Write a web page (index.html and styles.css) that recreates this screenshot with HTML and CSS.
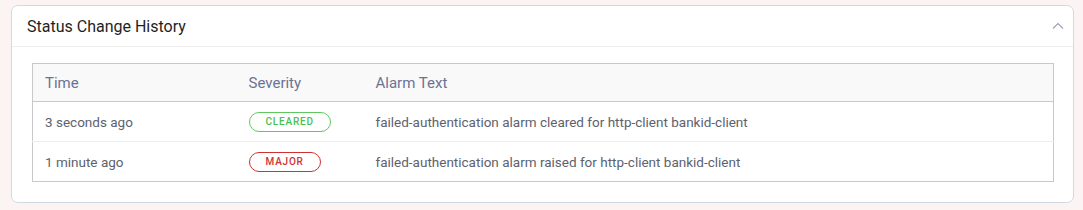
FILE: index.html
```html
<!DOCTYPE html>
<html lang="en">
<head>
    <meta charset="UTF-8">
    <title>Status Change History</title>
    <link rel="stylesheet" href="styles.css">
</head>
<body>
    <div class="panel">
        <div class="panel-header">
            <h2>Status Change History</h2>
            <svg class="chevron" width="12" height="7" viewBox="0 0 12 7">
                <path d="M1 6.5 L6 1.5 L11 6.5" fill="none" stroke="#9aa0bd" stroke-width="1.1"/>
            </svg>
        </div>
        <div class="panel-body">
            <table class="history">
                <colgroup>
                    <col class="col-time">
                    <col class="col-severity">
                    <col>
                </colgroup>
                <thead>
                    <tr>
                        <th>Time</th>
                        <th>Severity</th>
                        <th>Alarm Text</th>
                    </tr>
                </thead>
                <tbody>
                    <tr>
                        <td>3 seconds ago</td>
                        <td><span class="badge badge-cleared">CLEARED</span></td>
                        <td>failed-authentication alarm cleared for http-client bankid-client</td>
                    </tr>
                    <tr>
                        <td>1 minute ago</td>
                        <td><span class="badge badge-major">MAJOR</span></td>
                        <td>failed-authentication alarm raised for http-client bankid-client</td>
                    </tr>
                </tbody>
            </table>
        </div>
    </div>
</body>
</html>
```

FILE: styles.css
```css
* {
    margin: 0;
    padding: 0;
    box-sizing: border-box;
}

body {
    font-family: Roboto, "Liberation Sans", sans-serif;
    background: #fbf4f3;
    padding: 5px 9px 0 11px;
}

.panel {
    background: white;
    border: 1px solid #d3d9e0;
    border-radius: 7px;
}

.panel-header {
    display: flex;
    justify-content: space-between;
    align-items: center;
    height: 41px;
    padding: 0 9px 0 15px;
    border-bottom: 1px solid #eeeeee;
}

.panel-header h2 {
    font-size: 16px;
    font-weight: 400;
    color: #1f1f1f;
}

.chevron {
    margin-bottom: 1px;
}

.panel-body {
    padding: 16px 19px 20px 20px;
}

.history {
    width: 100%;
    border-collapse: collapse;
    table-layout: fixed;
    border: 1px solid #c9c9c9;
}

.col-time { width: 204px; }
.col-severity { width: 127px; }

.history th {
    height: 38px;
    text-align: left;
    font-size: 15px;
    font-weight: 400;
    color: #6c7294;
    background: #f9f9f9;
    padding: 0 12px;
    border-bottom: 1px solid #c9c9c9;
}

.history td {
    height: 40px;
    font-size: 13.5px;
    color: #5d626d;
    padding: 0 12px;
    border-bottom: 1px solid #ececec;
}

.history tbody tr:last-child td {
    border-bottom: none;
}

.badge {
    display: inline-block;
    font-size: 10px;
    font-weight: 500;
    letter-spacing: 0.8px;
    line-height: 18px;
    padding: 0 16px;
    border-radius: 10px;
    border: 1px solid;
}

.badge-cleared {
    color: #4cc24c;
    border-color: #5fc95f;
}

.badge-major {
    color: #d03232;
    border-color: #d03232;
}
```
